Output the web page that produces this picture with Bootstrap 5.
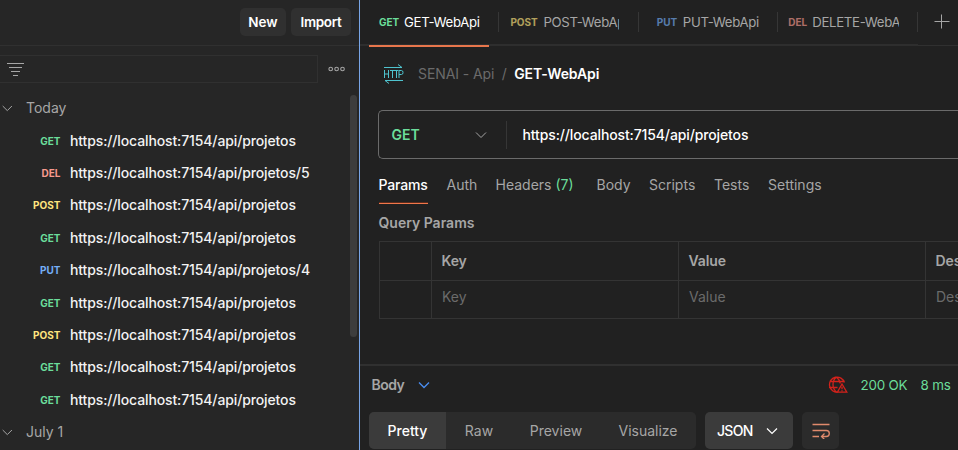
<!DOCTYPE html>
<html lang="en">
<head>
<meta charset="utf-8">
<meta name="viewport" content="width=device-width, initial-scale=1">
<title>GET-WebApi</title>
<link href="https://cdn.jsdelivr.net/npm/bootstrap@5.3.0/dist/css/bootstrap.min.css" rel="stylesheet">
<style>
body{font-family:Inter,"Liberation Sans",sans-serif;font-size:14px;line-height:20px;background:#212121;color:#a6a6a6;height:450px}
svg{display:block;flex:none;fill:none;stroke:currentColor}
.white{color:#fff}.get{color:#6bdd9a}.post{color:#ffe47e}.put{color:#74aef6}.del{color:#f79a8e}
.sidebar{width:360px;background:#262626;border-right:1px solid #78a5e6}
.side-head{height:46px;border-bottom:1px solid #303030;padding:0 8px 2px 0;gap:5px}
.tool-btn{background:#303030;color:#fff;font-weight:600;font-size:13.5px;letter-spacing:-.35px;line-height:20px;height:28px;padding:4px 0;border:0;border-radius:5px}
.tool-btn.b-new{width:46px;letter-spacing:0}.tool-btn.b-import{width:60px}
.filter{width:318px;height:28px;border:1px solid #303030;border-left:0;padding-left:7px}
.group-row{height:32.4px;padding-left:2px;gap:13px}
.req{height:32.4px}
.verb{font-size:10px;font-weight:700;line-height:20px}
.req .verb{width:60.5px;text-align:right;margin-right:9.5px}
.req .url{color:#f2f2f2}
.url{font-weight:500;letter-spacing:-.125px}
.thumb{width:7px;height:242px;top:95px;right:2px;border-radius:4px;background:#3d3d3d}
.tabs{height:46px}
.tab-item{width:139.4px;height:46px;border-bottom:2px solid #2e2e2e;padding-bottom:1px;flex:none}
.tab-item .ttl{overflow:hidden;white-space:nowrap;font-size:13.2px;letter-spacing:-.3px}
.tab-item.on .ttl{color:#fff}
.tab-item.off .verb{opacity:.65}
.vsep{width:1px;height:20px;background:#363636;flex:none}
.on-bar{height:2px;width:120px;background:#e8764c;left:9px;top:45px}
.crumb{letter-spacing:-.1px}
.urlbar{height:49px;border:1px solid #6b6b6b;border-right:0;border-radius:5px 0 0 5px;margin-left:18px;padding-left:12.5px}
.subtabs{height:36px;margin:9px 0 0 18.5px}
.subtabs>div{height:36px;padding-top:7px}
.subtabs .on{color:#fff;border-bottom:1px solid #f0764a;box-shadow:inset 0 -1px #5a2a1c;font-weight:500;letter-spacing:-.15px}
.ptable{margin-left:19px;width:620px;border-top:1px solid #343434;border-left:1px solid #343434}
.ptable .pr{border-bottom:1px solid #343434}
.ptable .pr>div{border-right:1px solid #343434;flex:none;padding-left:9.5px;white-space:nowrap}
.ptable .pr>.h2r{padding:6px 0 0 10px}
.c0{width:52px}.c1,.c2{width:247px}.c3{width:200px}
.h1r{height:38px;font-weight:600;letter-spacing:-.1px}.h2r{height:37px;color:#6b6b6b}
.resp{border-top:2px solid #303030}
.status{font-size:13.4px;letter-spacing:-.2px}
.seg{background:#2b2b2b;border-radius:5px;height:37px;overflow:hidden}
.seg>div{height:37px;line-height:37px;text-align:center}
.seg .on{background:#3b3b3b;color:#fff;font-weight:500}
</style>
<script src="https://cdn.jsdelivr.net/npm/bootstrap@5.3.0/dist/js/bootstrap.bundle.min.js"></script>
</head>
<body class="d-flex overflow-hidden">
<aside class="sidebar position-relative flex-shrink-0 overflow-hidden">
  <div class="side-head d-flex align-items-center justify-content-end">
    <button class="tool-btn b-new">New</button>
    <button class="tool-btn b-import">Import</button>
  </div>
  <div class="d-flex align-items-center" style="margin:9px 0 9px">
    <div class="filter d-flex align-items-center"><svg width="18" height="16" viewBox="0 0 18 16"><path d="M0 2.5h17M2 6.5h13M4 10.5h9M6 14.5h5"/></svg></div>
    <svg width="18" height="8" viewBox="0 0 18 8" style="margin-left:10px"><g stroke-width="1.1"><circle cx="2.7" cy="4" r="1.8"/><circle cx="8.6" cy="4" r="1.8"/><circle cx="14.5" cy="4" r="1.8"/></g></svg>
  </div>
  <div class="group-row d-flex align-items-center"><svg width="11" height="7" viewBox="0 0 11 7"><path d="M.7 1l4.6 4.6L9.9 1"/></svg><span>Today</span></div>
  <div class="req d-flex align-items-center"><span class="verb get">GET</span><span class="url">https://localhost:7154/api/projetos</span></div>
  <div class="req d-flex align-items-center"><span class="verb del">DEL</span><span class="url">https://localhost:7154/api/projetos/5</span></div>
  <div class="req d-flex align-items-center"><span class="verb post">POST</span><span class="url">https://localhost:7154/api/projetos</span></div>
  <div class="req d-flex align-items-center"><span class="verb get">GET</span><span class="url">https://localhost:7154/api/projetos</span></div>
  <div class="req d-flex align-items-center"><span class="verb put">PUT</span><span class="url">https://localhost:7154/api/projetos/4</span></div>
  <div class="req d-flex align-items-center"><span class="verb get">GET</span><span class="url">https://localhost:7154/api/projetos</span></div>
  <div class="req d-flex align-items-center"><span class="verb post">POST</span><span class="url">https://localhost:7154/api/projetos</span></div>
  <div class="req d-flex align-items-center"><span class="verb get">GET</span><span class="url">https://localhost:7154/api/projetos</span></div>
  <div class="req d-flex align-items-center"><span class="verb get">GET</span><span class="url">https://localhost:7154/api/projetos</span></div>
  <div class="group-row d-flex align-items-center"><svg width="11" height="7" viewBox="0 0 11 7"><path d="M.7 1l4.6 4.6L9.9 1"/></svg><span>July 1</span></div>
  <div class="thumb position-absolute"></div>
</aside>
<main class="flex-grow-1 overflow-hidden" style="min-width:0">
  <div class="tabs d-flex position-relative">
    <div class="tab-item on d-flex align-items-center" style="padding-left:19px"><span class="verb get" style="width:25px">GET</span><span class="ttl">GET-WebApi</span><span class="vsep ms-auto"></span></div>
    <div class="tab-item off d-flex align-items-center" style="padding-left:11px"><span class="verb post" style="width:33px">POST</span><span class="ttl" style="width:76px">POST-WebApi</span><span class="vsep ms-auto"></span></div>
    <div class="tab-item off d-flex align-items-center" style="padding-left:18px"><span class="verb put" style="width:26px">PUT</span><span class="ttl">PUT-WebApi</span><span class="vsep ms-auto"></span></div>
    <div class="tab-item off d-flex align-items-center" style="padding-left:10px"><span class="verb del" style="width:24px">DEL</span><span class="ttl" style="width:87px">DELETE-WebApi</span><span class="vsep ms-auto"></span></div>
    <div class="flex-grow-1" style="border-bottom:1px solid #303030;padding:14px 0 0 16px"><svg width="16" height="16" viewBox="0 0 16 16"><path d="M.5 7.5h15M7.5 .5v14"/></svg></div>
    <div class="on-bar position-absolute"></div>
  </div>
  <div class="crumb d-flex align-items-center" style="height:56px;padding-left:23px">
    <svg width="21" height="20" viewBox="0 0 21 20" style="color:#4fc3ce"><path d="M1 3.5h18l-4-3M20 16.5H2l4 3M1.5 6v8M5.5 6v8M1.5 10h4M7 6.5h5M9.5 6.5V14M11.5 6.5h4M13.5 6.5V14M16 14V6.5h2.5q1.5 0 1.5 2t-1.5 2H16"/></svg>
    <span style="color:#6b6b6b;margin-left:14px">SENAI - Api</span><span style="color:#6b6b6b;margin:0 7.5px">/</span><span class="white fw-semibold">GET-WebApi</span>
  </div>
  <div style="height:8px"></div>
  <div class="urlbar d-flex align-items-center">
    <span class="get fw-semibold" style="width:83px">GET</span>
    <svg width="12" height="8" viewBox="0 0 12 8"><path d="M1 1.5l5 5 5-5"/></svg>
    <span class="vsep" style="height:28px;margin:0 15.5px 0 19.5px"></span>
    <span class="white url">https://localhost:7154/api/projetos</span>
  </div>
  <div class="subtabs d-flex">
    <div class="on" style="width:49px">Params</div><div style="margin-left:19px;width:49px">Auth</div><div style="width:101px">Headers <span class="get">(7)</span></div><div style="width:52.5px">Body</div><div style="width:65px">Scripts</div><div style="width:54px">Tests</div><div>Settings</div>
  </div>
  <div class="fw-semibold" style="padding:9px 0 8px 18.5px">Query Params</div>
  <div class="ptable">
    <div class="pr d-flex"><div class="c0 h1r"></div><div class="c1 h1r d-flex align-items-center">Key</div><div class="c2 h1r d-flex align-items-center">Value</div><div class="c3 h1r d-flex align-items-center">Description</div></div>
    <div class="pr d-flex"><div class="c0 h2r"></div><div class="c1 h2r">Key</div><div class="c2 h2r">Value</div><div class="c3 h2r">Description</div></div>
  </div>
  <div style="height:45px"></div>
  <div class="resp">
    <div class="d-flex align-items-center" style="height:38px;padding:0 8px 1px 11.5px">
      <span class="fw-semibold" style="width:46.5px;letter-spacing:-.5px">Body</span>
      <svg width="12" height="8" viewBox="0 0 12 8" style="color:#4a8df0"><path d="M1 1.5l5 5 5-5" stroke-width="1.3"/></svg>
      <svg class="ms-auto" width="20" height="18" viewBox="0 0 20 18" style="color:#d3221b;margin-right:13px"><path d="M10 16.2A7.6 7.6 0 1 1 16.4 6.5M9 16.3C3.5 12.5 4 4 8.5 1.2C11 3 12 5 12.2 7.5M1.5 5.5h14M1 11.5h8.5M14 8l4.8 8.2H9.4zM14 10.8v2.5M14 14.2v1" stroke-width="1.3"/></svg>
      <span class="get status" style="width:60px">200 OK</span><span class="get status text-nowrap" style="width:29.5px">8 ms</span>
    </div>
    <div class="d-flex" style="padding:8px 0 0 9px">
      <div class="seg d-flex"><div class="on" style="width:77px">Pretty</div><div style="width:66px">Raw</div><div style="width:88px">Preview</div><div style="width:96px">Visualize</div></div>
      <div class="d-flex align-items-center white fw-medium" style="width:88px;height:37px;margin-left:9px;padding-left:12px;border-radius:5px;background:#3b3b3b"><span style="width:49px;letter-spacing:-.7px">JSON</span><svg width="12" height="8" viewBox="0 0 12 8"><path d="M1 1.5l5 5 5-5" stroke-width="1.2"/></svg></div>
      <div class="d-flex align-items-center justify-content-center" style="width:37px;height:37px;margin-left:9px;border-radius:5px;background:#2b2b2b;color:#e08a6c"><svg width="18" height="16" viewBox="0 0 18 16"><path d="M.5 1.5h17M.5 7.5h13.8a3 3 0 0 1 0 6H10M.5 13.5h6.5M12.5 10.5l-3 3 3 3" stroke-width="1.3"/></svg></div>
    </div>
  </div>
</main>
</body>
</html>
